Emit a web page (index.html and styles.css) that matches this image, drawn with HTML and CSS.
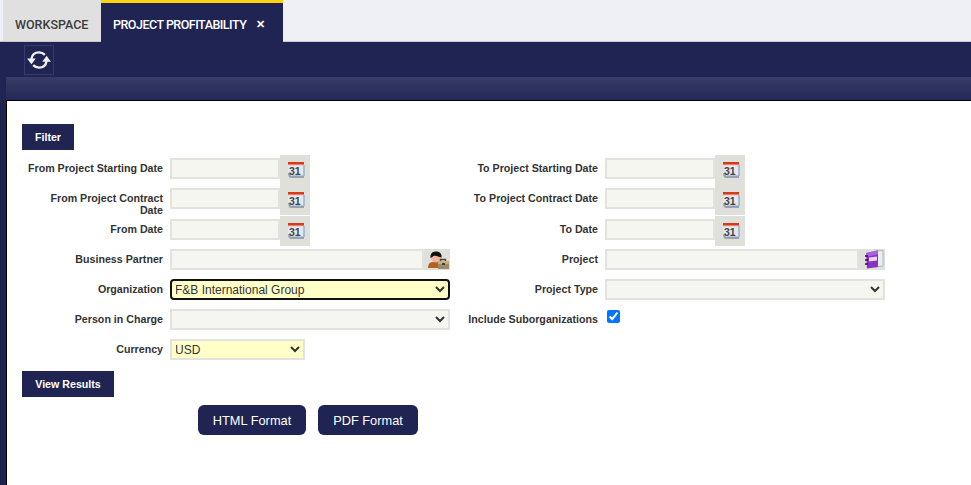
FILE: index.html
```html
<!DOCTYPE html>
<html lang="en">
<head>
    <meta charset="UTF-8">
    <meta name="viewport" content="width=device-width, initial-scale=1.0">
    <title>Project Profitability</title>
    <link rel="stylesheet" href="styles.css">
</head>
<body>
    <svg class="icon-defs" width="0" height="0" aria-hidden="true">
        <defs>
            <symbol id="calendar" viewBox="0 0 18 18">
                <path d="M1 1h16v14H4L1 17z" fill="#e3e8ee"/>
                <path d="M1 1h16v3H1z" fill="#d8381c"/>
                <path d="M1 4h16" stroke="#f0c4b4" stroke-width="1"/>
                <path d="M1 12c0 3 1 5 3 5h13v-2H5c-1 0-2-1-2-3z" fill="#9aa3a8"/>
                <path d="M17 4v11" fill="none" stroke="#86a2c6" stroke-width="1.200"/>
                <path d="M5 15h12" stroke="#86a2c6" stroke-width="1"/>
                <text x="2" y="13.500" class="cal-day">31</text>
            </symbol>
        </defs>
    </svg>

    <div class="tabs">
        <div class="tab">WORKSPACE</div>
        <div class="tab tab-active">PROJECT PROFITABILITY <span class="tab-close">&#10005;</span></div>
    </div>

    <div class="toolbar">
        <button class="refresh-btn" aria-label="Refresh">
            <svg width="26" height="26" viewBox="0 0 24 24" fill="none" stroke="#f2f2f6" stroke-width="2.200">
                <path d="M5 11c.6-4 3.6-6 7-6 2.400 0 4 .8 5.400 2.200"/>
                <path d="M1 10.500h8L5 16z" fill="#f2f2f6" stroke="none"/>
                <path d="M19 13c-.6 4-3.600 6-7 6-2.400 0-4-.8-5.400-2.200"/>
                <path d="M15 13.500h8L19 8z" fill="#f2f2f6" stroke="none"/>
            </svg>
        </button>
    </div>

    <div class="frame">
        <div class="subbar"></div>
        <div class="content">
            <div class="section-title">Filter</div>

            <div class="form-grid">
                <label class="form-label">From Project Starting Date</label>
                <div class="field"><input class="input input-date" type="text"><span class="date-btn"><svg width="18" height="18"><use href="#calendar"/></svg></span></div>
                <label class="form-label">To Project Starting Date</label>
                <div class="field"><input class="input input-date" type="text"><span class="date-btn"><svg width="18" height="18"><use href="#calendar"/></svg></span></div>

                <label class="form-label">From Project Contract Date</label>
                <div class="field"><input class="input input-date" type="text"><span class="date-btn"><svg width="18" height="18"><use href="#calendar"/></svg></span></div>
                <label class="form-label">To Project Contract Date</label>
                <div class="field"><input class="input input-date" type="text"><span class="date-btn"><svg width="18" height="18"><use href="#calendar"/></svg></span></div>

                <label class="form-label">From Date</label>
                <div class="field"><input class="input input-date" type="text"><span class="date-btn"><svg width="18" height="18"><use href="#calendar"/></svg></span></div>
                <label class="form-label">To Date</label>
                <div class="field"><input class="input input-date" type="text"><span class="date-btn"><svg width="18" height="18"><use href="#calendar"/></svg></span></div>

                <label class="form-label">Business Partner</label>
                <div class="field">
                    <input class="input input-search" type="text">
                    <span class="search-btn">
                        <svg width="22" height="18" viewBox="0 0 22 18">
                            <path d="M0 17c0-4 2-6 5-6h7v6z" fill="#b5611f"/>
                            <circle cx="8" cy="6.500" r="5" fill="#f0b4a0"/>
                            <path d="M2.500 7C2 2 5 0 9 .5c3.500.3 5 3 4.500 6-3-1-6-2.500-8-1.500-1 .5-1.500 1.500-3 2z" fill="#101010"/>
                            <path d="M12.500 10V8.500h5V10" fill="none" stroke="#4a4236" stroke-width="1.400"/>
                            <path d="M10 10h11v8H10z" fill="#9c8a68"/>
                            <path d="M10 10h11v3H10z" fill="#c2ae88"/>
                            <path d="M14 12h3v2h-3z" fill="#4a4236"/>
                        </svg>
                    </span>
                </div>
                <label class="form-label">Project</label>
                <div class="field">
                    <input class="input input-search" type="text">
                    <span class="search-btn">
                        <svg width="22" height="19" viewBox="0 0 22 19">
                            <path d="M12 1l8-.5V16l-8 1z" fill="#e8eef3" stroke="#aeb8be" stroke-width="1"/>
                            <path d="M3 3l12-2.500V17L4 18.500z" fill="#8a2ec6"/>
                            <path d="M3 3l12-2.500v4L3 7z" fill="#a860dc"/>
                            <path d="M6 7.500l8-1v4l-8 1z" fill="#e6d4f2"/>
                            <path d="M2 6h3M2 10h3M2 14h3" stroke="#201828" stroke-width="1.400"/>
                        </svg>
                    </span>
                </div>

                <label class="form-label">Organization</label>
                <div class="field">
                    <select class="input select select-focus">
                        <option>F&amp;B International Group</option>
                    </select>
                </div>
                <label class="form-label">Project Type</label>
                <div class="field">
                    <select class="input select"><option></option></select>
                </div>

                <label class="form-label">Person in Charge</label>
                <div class="field">
                    <select class="input select"><option></option></select>
                </div>
                <label class="form-label">Include Suborganizations</label>
                <div class="field"><input class="check" type="checkbox" checked></div>

                <label class="form-label">Currency</label>
                <div class="field">
                    <select class="input select select-small select-required"><option>USD</option></select>
                </div>
            </div>

            <div class="section-title section-results">View Results</div>

            <div class="actions">
                <button class="action-btn html-btn">HTML Format</button>
                <button class="action-btn pdf-btn">PDF Format</button>
            </div>
        </div>
    </div>
</body>
</html>
```

FILE: styles.css
```css
* {
    margin: 0;
    padding: 0;
    box-sizing: border-box;
}

html, body {
    height: 485px;
    overflow: hidden;
}

body {
    display: flex;
    flex-direction: column;
    background: #1f2452;
    font-family: "Liberation Sans", Arial, sans-serif;
    color: #333;
}

.icon-defs {
    position: absolute;
}

.cal-day {
    font: bold 10.5px "Liberation Sans", sans-serif;
    fill: #444;
}

/* Tabs */
.tabs {
    display: flex;
    height: 42px;
    padding-left: 3px;
    background: #eff0f6;
    border-bottom: 1px solid #c9c9c9;
}

.tab {
    display: flex;
    align-items: center;
    gap: 10px;
    width: 98px;
    height: 41px;
    padding: 7px 0 0 12px;
    background: #e0e0e0;
    color: #3b3b3b;
    font-family: Roboto, sans-serif;
    font-size: 12.5px;
    font-weight: 500;
}

.tab-active {
    width: 182px;
    height: 42px;
    padding: 4px 0 0 12px;
    background: #1f2452;
    border-top: 3px solid #fdd20e;
    color: #fff;
    letter-spacing: -0.5px;
}

.tab-close {
    font-size: 11px;
    font-weight: 700;
}

/* Toolbar */
.toolbar {
    height: 35px;
    padding: 3px 0 0 24px;
}

.refresh-btn {
    display: flex;
    align-items: center;
    justify-content: center;
    width: 30px;
    height: 30px;
    background: #1f2452;
    border: 1px solid #343a72;
}

/* Frame */
.frame {
    flex: 1;
    display: flex;
    flex-direction: column;
    margin-left: 6px;
}

.subbar {
    height: 23px;
    background: linear-gradient(#383c66, #232856);
}

.content {
    flex: 1;
    padding: 23px 15px 0;
    background: #fff;
    border-top: 1px solid #000;
    border-left: 1px solid #000;
}

.section-title {
    width: 52px;
    height: 26px;
    background: #1f2452;
    color: #fff;
    font-size: 10.67px;
    font-weight: 700;
    line-height: 26px;
    text-align: center;
}

.section-results {
    width: 92px;
    margin-top: 5px;
}

/* Form */
.form-grid {
    display: grid;
    grid-template-columns: 141px 280px 141px 280px;
    grid-auto-rows: minmax(30px, auto);
    column-gap: 7px;
    margin-top: 5px;
}

.form-label {
    padding: 7px 0 0 5px;
    font-size: 10.67px;
    font-weight: 700;
    line-height: 12px;
    text-align: right;
}

.field {
    display: flex;
    align-items: flex-start;
}

.input {
    height: 21px;
    margin-top: 3px;
    background: #f4f6ef;
    border: 2px solid #e2e3df;
    color: #333;
    font-family: "Liberation Sans", Arial, sans-serif;
    font-size: 12px;
    outline: none;
}

.input-date {
    width: 110px;
}

.input-search {
    width: 254px;
}

.date-btn {
    display: flex;
    align-items: center;
    justify-content: center;
    width: 30px;
    height: 30px;
    background: #dfe0da;
    padding-left: 2px;
}

.search-btn {
    display: flex;
    align-items: center;
    justify-content: center;
    width: 26px;
    height: 21px;
    margin-top: 3px;
    padding-left: 3px;
    background: #dfe0da;
}

.select {
    width: 280px;
}

.select-focus {
    background: #ffffc8;
    border-color: #111;
    border-radius: 4px;
    text-indent: -1px;
}

.select-small {
    width: 135px;
    text-indent: -1px;
}

.select-required {
    background: #ffffc8;
}

.check {
    width: 13px;
    height: 13px;
    margin: 4px 0 0 2px;
}

/* Actions */
.actions {
    display: flex;
    gap: 12px;
    margin-top: 8px;
    padding-left: 176px;
}

.action-btn {
    height: 30px;
    background: #1f2452;
    border: none;
    border-radius: 6px;
    color: #fff;
    font-family: "Liberation Sans", Arial, sans-serif;
    font-size: 12.8px;
}

.html-btn {
    width: 108px;
}

.pdf-btn {
    width: 100px;
}
```
